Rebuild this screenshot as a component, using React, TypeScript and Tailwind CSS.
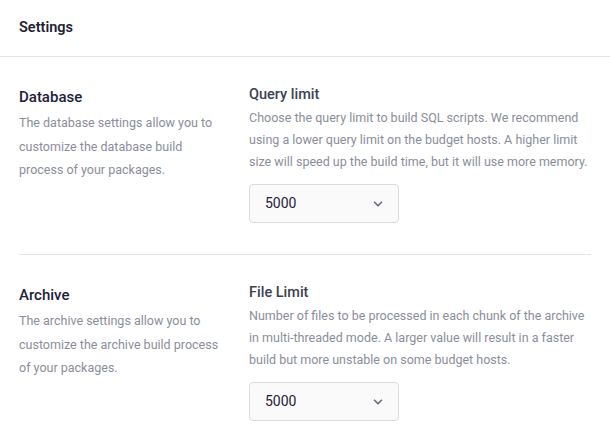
import { ChevronDown } from 'lucide-react';

const sections = [
  {
    id: 'database',
    title: 'Database',
    description: 'The database settings allow you to customize the database build process of your packages.',
    label: 'Query limit',
    help: 'Choose the query limit to build SQL scripts. We recommend using a lower query limit on the budget hosts. A higher limit size will speed up the build time, but it will use more memory.',
    value: '5000',
  },
  {
    id: 'archive',
    title: 'Archive',
    description: 'The archive settings allow you to customize the archive build process of your packages.',
    label: 'File Limit',
    help: 'Number of files to be processed in each chunk of the archive in multi-threaded mode. A larger value will result in a faster build but more unstable on some budget hosts.',
    value: '5000',
  },
];

const App = () => {
  return (
    <div className="min-h-screen bg-white font-['Roboto',sans-serif]">
      <div className="h-[57px] border-b border-[#e5e5e5] px-[19px] flex items-center">
        <h1 className="text-[14.5px] font-semibold text-[#1e2230]">Settings</h1>
      </div>

      <div className="px-[19px]">
        {sections.map((section, index) => (
          <div
            key={section.id}
            className={`flex pt-[28px] pb-[31px] ${index < sections.length - 1 ? 'border-b border-[#e5e5e5]' : ''}`}
          >
            <div className="w-[230px] shrink-0 pt-[2px]">
              <h2 className="text-[15px] leading-[20px] font-medium text-[#1e2139]">{section.title}</h2>
              <p className="mt-[4px] max-w-[203px] text-[12.5px] leading-[23.5px] text-[#8a8e9a]">{section.description}</p>
            </div>
            <div className="flex-1">
              <h3 className="text-[14.5px] leading-[20px] font-medium text-[#3d4152]">{section.label}</h3>
              <p className="mt-[2px] text-[12.5px] leading-[22px] text-[#8a8e9a]">{section.help}</p>
              <button className="mt-[11px] w-[150px] h-[39px] flex items-center justify-between pl-[15px] pr-[13px] bg-[#fafafa] border border-[#dcdcdc] rounded-[4px]">
                <span className="text-[14px] text-[#1e2139]">{section.value}</span>
                <ChevronDown className="w-[14px] h-[14px] text-[#6b7080]" strokeWidth={3} />
              </button>
            </div>
          </div>
        ))}
      </div>
    </div>
  );
};

export default App;
